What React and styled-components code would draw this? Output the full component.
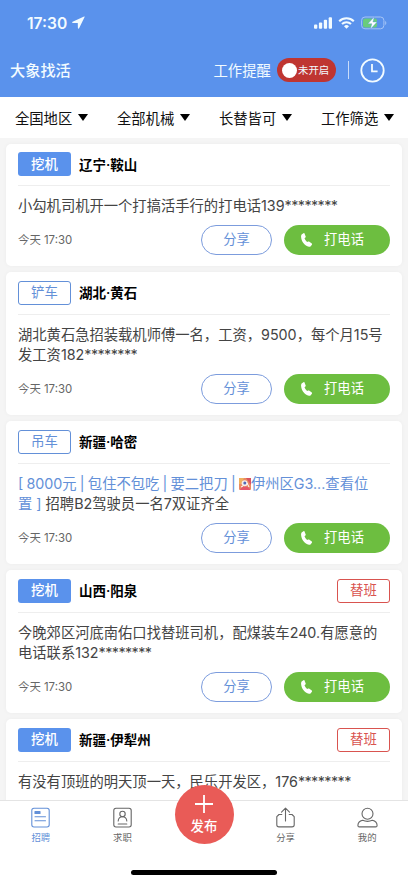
import React from 'react'
import styled, { createGlobalStyle, css } from 'styled-components'

const v = {
  blue: '#5a92ec',
  linkBlue: '#6390d8',
  green: '#6dbe40',
  red: '#e95b57',
  darkRed: '#bf3531',
  text: '#444',
  gray: '#666',
  font: 'Inter, "Noto Sans CJK SC", sans-serif',
}

const GlobalStyle = createGlobalStyle`
  * {
    box-sizing: border-box;
  }

  body {
    margin: 0;
    background: #f5f5f5;
    font-family: ${v.font};
    overflow: hidden;
  }
`

const Screen = styled.div`
  display: flex;
  flex-direction: column;
  width: 408px;
  height: 883px;
  overflow: hidden;
`

const Header = styled.header`
  flex: none;
  height: 97px;
  background: ${v.blue};
  color: #f2fbff;
`

const StatusBar = styled.div`
  display: flex;
  align-items: center;
  height: 45px;
  padding: 0 21px 0 27px;
`

const Clock = styled.span`
  margin-right: 5px;
  padding-top: 1px;
  font-size: 15.6px;
  font-weight: 600;
`

const StatusIcons = styled.div`
  display: flex;
  align-items: center;
  gap: 6px;
  margin-left: auto;
`

const TitleBar = styled.div`
  display: flex;
  align-items: center;
  height: 50px;
  padding: 0 23px 0 10px;
`

const Title = styled.h1`
  margin: 0 auto 2px 0;
  font-size: 15.2px;
  font-weight: 500;
`

const ReminderLabel = styled.span`
  margin-bottom: 2px;
  font-size: 14.4px;
`

const Toggle = styled.div`
  display: flex;
  align-items: center;
  gap: 1px;
  width: 59px;
  height: 24px;
  margin-left: 6px;
  padding: 0 0 1px 5px;
  border-radius: 12px;
  background: ${v.darkRed};
  font-size: 10.4px;

  &::before {
    content: '';
    width: 15px;
    height: 15px;
    margin-top: 1px;
    border-radius: 50%;
    background: #fff;
  }
`

const Separator = styled.i`
  width: 1px;
  height: 18px;
  margin: 0 11px 0 12px;
  background: #c9dcfa;
`

const Filters = styled.nav`
  flex: none;
  display: grid;
  grid-template-columns: repeat(4, 102px);
  height: 41px;
  background: #fff;
`

const Filter = styled.div`
  display: flex;
  align-items: center;
  padding: 0 0 1px 15px;
  color: #111;
  font-size: 14.3px;

  &::after {
    content: '';
    margin: 1px 0 0 6px;
    border: 5px solid transparent;
    border-top: 7px solid #000;
    border-bottom: 0;
  }
`

const List = styled.main`
  flex: 1;
  min-height: 0;
  overflow: hidden;
  padding: 5.5px 6px 0;
`

const Card = styled.article`
  height: ${props => (props.$lines === 1 ? 122.5 : 143)}px;
  margin-bottom: 6px;
  padding: 0 12px;
  border-radius: 5px;
  background: #fff;
  box-shadow: 0 0 4px rgba(0, 0, 0, 0.04);
`

const CardHead = styled.div`
  display: flex;
  align-items: center;
  height: 42.5px;
  border-bottom: 1px solid #eee;
`

const outlined = css`
  border: 1px solid ${props => props.$color};
  color: ${props => props.$color};
`

const Tag = styled.span`
  display: flex;
  align-items: center;
  justify-content: center;
  width: 53px;
  height: 24px;
  padding-bottom: 3px;
  border-radius: 3px;
  font-size: 13.4px;
  ${props => (props.$filled ? css`
    background: ${v.blue};
    color: #fff;
    font-weight: 500;
  ` : outlined)}
`

const Place = styled.h2`
  margin: 0 auto 1px 8px;
  color: #000;
  font-size: 13.5px;
  font-weight: 600;
`

const Message = styled.p`
  margin: 10.3px 0 0;
  color: ${v.text};
  font-size: 14.3px;
  line-height: 20.5px;
  white-space: nowrap;
`

const Line = styled.span`
  display: block;
`

const Stars = styled.span`
  letter-spacing: -0.55px;
`

const Highlight = styled.span`
  color: ${v.linkBlue};
  word-spacing: ${props => (props.$tight ? '-0.8px' : 'normal')};
`

const CardFoot = styled.div`
  display: flex;
  align-items: center;
  height: 30px;
  margin-top: 8px;
`

const Time = styled.time`
  margin: 0 auto 2px 0;
  color: ${v.gray};
  font-size: 11.4px;
`

const Button = styled.button`
  display: flex;
  align-items: center;
  justify-content: center;
  height: 30px;
  padding: 0 0 2px;
  border: 0;
  border-radius: 15px;
  background: none;
  font-family: inherit;
  font-size: 13.3px;
`

const ShareButton = styled(Button)`
  width: 71px;
  border: 1px solid #7c9cdd;
  color: ${v.linkBlue};
`

const CallButton = styled(Button)`
  gap: 11px;
  width: 106px;
  margin-left: 12px;
  padding-right: 9px;
  background: ${v.green};
  color: #fff;

  svg {
    margin-top: 2px;
  }
`

const TabBar = styled.footer`
  position: relative;
  flex: none;
  display: flex;
  flex-direction: column;
  align-items: center;
  justify-content: space-between;
  height: 83px;
  padding-bottom: 8px;
  border-top: 1px solid #e4e4e4;
  background: #fff;
`

const Tabs = styled.div`
  display: grid;
  grid-template-columns: repeat(5, 1fr);
  width: 100%;
`

const Tab = styled.div`
  display: flex;
  flex-direction: column;
  align-items: center;
  gap: 3px;
  padding-top: 6px;
  color: ${props => (props.$active ? v.linkBlue : v.gray)};
  font-size: 9.4px;
  line-height: 13px;
`

const Publish = styled.div`
  position: absolute;
  top: -16px;
  left: 50%;
  display: flex;
  flex-direction: column;
  align-items: center;
  gap: 3px;
  width: 59px;
  height: 59px;
  margin-left: -29.5px;
  padding-top: 10px;
  border-radius: 50%;
  background: ${v.red};
  color: #fff;
  font-size: 13.4px;
  font-weight: 500;
  line-height: 20px;
`

const HomeIndicator = styled.div`
  width: 146px;
  height: 5px;
  border-radius: 3px;
  background: #000;
`

const InlineIcon = styled.svg`
  vertical-align: -1px;
`

const LocationArrow = () => (
  <svg width="13" height="13" viewBox="0 0 13 13" fill="currentColor">
    <path d="M12.1.5.6 5.7c-.7.3-.6 1.2.2 1.2l5 .1.1 5c0 .8.9.9 1.2.2L12.6 1c.2-.4-.1-.7-.5-.5Z" />
  </svg>
)

const SignalIcon = () => (
  <svg width="18" height="12" viewBox="0 0 18 12" fill="currentColor">
    <rect x="0" y="7.5" width="3.3" height="4.2" rx="1" />
    <rect x="4.9" y="5.5" width="3.3" height="6.2" rx="1" />
    <rect x="9.8" y="2.8" width="3.3" height="8.9" rx="1" />
    <rect x="14.7" y="0.2" width="3.3" height="11.5" rx="1" />
  </svg>
)

const WifiIcon = () => (
  <svg width="17" height="12" viewBox="0 0 17 12" fill="none" stroke="currentColor" strokeWidth="2.1">
    <path d="M1.2 4.2a10.5 10.5 0 0 1 14.6 0" />
    <path d="M4 7.1a6.5 6.5 0 0 1 9 0" />
    <path d="M8.5 11.8 6 9.3a3.6 3.6 0 0 1 5 0Z" fill="currentColor" stroke="none" />
  </svg>
)

const BatteryIcon = () => (
  <svg width="26" height="14" viewBox="0 0 26 14">
    <rect x="0.6" y="1" width="22.3" height="11.8" rx="3.4" fill="none" stroke="#a5c4f6" />
    <rect x="2" y="2.5" width="14" height="8.9" rx="2" fill="#69cc7d" />
    <path d="M24.2 5v4c1.5-.6 1.5-3.4 0-4Z" fill="#a5c4f6" />
    <path d="M13.3.8 6.9 7.8h4l-1.6 5.4L16 6h-4.1Z" fill="#fff" stroke={v.blue} strokeWidth="0.4" />
  </svg>
)

const HistoryIcon = () => (
  <svg width="25" height="25" viewBox="0 0 25 25" fill="none" stroke="currentColor" strokeWidth="1.8">
    <circle cx="12.5" cy="12.5" r="11.2" />
    <path d="M12 6v7.3h5.6" />
  </svg>
)

const PhoneIcon = () => (
  <svg width="12" height="14" viewBox="0 0 12 14" fill="currentColor">
    <path d="M.9 1.2 2.5.2c.4-.2.8-.1 1 .3l1.2 2.9c.2.4.1.8-.3 1.1l-.9.7c.5 1.5 1.4 2.8 2.6 3.8l1.1-.5c.4-.2.8-.1 1.2.2l2.4 1.9c.3.3.4.7.1 1.1l-1.2 1.500c-.4.5-1.100.7-1.800.5C3.700 12.600.5 8.900.1 4 0 2.900.2 1.700.9 1.200Z" />
  </svg>
)

// small stamp that the original poster put in front of the address
const StampEmoji = () => (
  <InlineIcon width="12" height="12" viewBox="0 0 12 12">
    <rect width="12" height="12" rx="1" fill="#e98a63" />
    <path d="M0 0h5L2 6H0Z" fill="#efb25d" />
    <path d="M7 0h5v7Z" fill="#d9535f" />
    <path d="M1 12c1-4 7-5 10-1v1Z" fill="#e5576a" />
    <circle cx="5.6" cy="5.3" r="3" fill="#f5eee8" />
    <circle cx="5.8" cy="5" r="1.5" fill="#5269b5" />
    <path d="M8 5l2 4M2 9l2-1" stroke="#fff" strokeWidth="1" />
  </InlineIcon>
)

const TabIcon = ({ children }) => (
  <svg width="21" height="21" viewBox="0 0 21 21" fill="none" stroke="currentColor" strokeWidth="1.1" strokeLinecap="round" strokeLinejoin="round">
    {children}
  </svg>
)

const stars = <Stars>********</Stars>

const jobs = [
  {
    tag: '挖机',
    filled: true,
    place: '辽宁·鞍山',
    time: '今天 17:30',
    lines: [<>小勾机司机开一个打搞活手行的打电话139{stars}</>],
  },
  {
    tag: '铲车',
    place: '湖北·黄石',
    time: '今天 17:30',
    lines: ['湖北黄石急招装载机师傅一名，工资，9500，每个月15号', <>发工资182{stars}</>],
  },
  {
    tag: '吊车',
    place: '新疆·哈密',
    time: '今天 17:30',
    lines: [
      <Highlight $tight>[ 8000元 | 包住不包吃 | 要二把刀 | <StampEmoji />伊州区G3...查看位</Highlight>,
      <><Highlight>置 ]</Highlight> 招聘B2驾驶员一名7双证齐全</>,
    ],
  },
  {
    tag: '挖机',
    filled: true,
    place: '山西·阳泉',
    substitute: true,
    time: '今天 17:30',
    lines: ['今晚郊区河底南佑口找替班司机，配煤装车240.有愿意的', <>电话联系132{stars}</>],
  },
  {
    tag: '挖机',
    filled: true,
    place: '新疆·伊犁州',
    substitute: true,
    lines: [<>有没有顶班的明天顶一天，民乐开发区，176{stars}</>],
  },
]

const JobCard = ({ job }) => (
  <Card $lines={job.lines.length}>
    <CardHead>
      <Tag $filled={job.filled} $color={v.linkBlue}>{job.tag}</Tag>
      <Place>{job.place}</Place>
      {job.substitute && <Tag $color="#d9534f">替班</Tag>}
    </CardHead>
    <Message>
      {job.lines.map((line, i) => <Line key={i}>{line}</Line>)}
    </Message>
    {job.time && (
      <CardFoot>
        <Time>{job.time}</Time>
        <ShareButton>分享</ShareButton>
        <CallButton><PhoneIcon />打电话</CallButton>
      </CardFoot>
    )}
  </Card>
)

const App = () => (
  <Screen>
    <GlobalStyle />
    <Header>
      <StatusBar>
        <Clock>17:30</Clock>
        <LocationArrow />
        <StatusIcons>
          <SignalIcon />
          <WifiIcon />
          <BatteryIcon />
        </StatusIcons>
      </StatusBar>
      <TitleBar>
        <Title>大象找活</Title>
        <ReminderLabel>工作提醒</ReminderLabel>
        <Toggle>未开启</Toggle>
        <Separator />
        <HistoryIcon />
      </TitleBar>
    </Header>
    <Filters>
      {['全国地区', '全部机械', '长替皆可', '工作筛选'].map(name => (
        <Filter key={name}>{name}</Filter>
      ))}
    </Filters>
    <List>
      {jobs.map(job => <JobCard key={job.place} job={job} />)}
    </List>
    <TabBar>
      <Tabs>
        <Tab $active>
          <TabIcon>
            <rect x="1.8" y="1.2" width="17.4" height="18.8" rx="2.2" />
            <rect x="5" y="4.5" width="5" height="2" fill="currentColor" />
            <path d="M5 9.7h10.5M5 13.7h10.5" />
          </TabIcon>
          招聘
        </Tab>
        <Tab>
          <TabIcon>
            <rect x="1.8" y="1.2" width="17.4" height="18.8" rx="2.2" />
            <circle cx="10.5" cy="7" r="2.7" />
            <path d="M6.2 14c.2-2.6 1.7-4.2 4.3-4.2s4.1 1.6 4.3 4.2M6.2 17h8.6" />
          </TabIcon>
          求职
        </Tab>
        <div />
        <Tab>
          <TabIcon>
            <path d="M6.8 7.5H4L1.8 9.7v8c0 1.4.8 2.2 2.2 2.2h13c1.4 0 2.2-.8 2.2-2.2v-8L17 7.5h-2.8M10.5 14V1.2M6.5 5.1l4-3.9 4 3.9" />
          </TabIcon>
          分享
        </Tab>
        <Tab>
          <TabIcon>
            <circle cx="10.5" cy="6.7" r="5.5" />
            <path d="M5.6 13.3C2.8 14 .9 16 .9 18.4c0 .9.5 1.5 1.4 1.5h16.4c.9 0 1.4-.6 1.4-1.5 0-2.4-1.9-4.4-4.7-5.1-2.9 1.3-6.9 1.3-9.8 0Z" />
          </TabIcon>
          我的
        </Tab>
      </Tabs>
      <Publish>
        <svg width="18" height="18" viewBox="0 0 18 18" stroke="currentColor" strokeWidth="1.8">
          <path d="M0 9h18M9 0v18" />
        </svg>
        发布
      </Publish>
      <HomeIndicator />
    </TabBar>
  </Screen>
)

export default App
